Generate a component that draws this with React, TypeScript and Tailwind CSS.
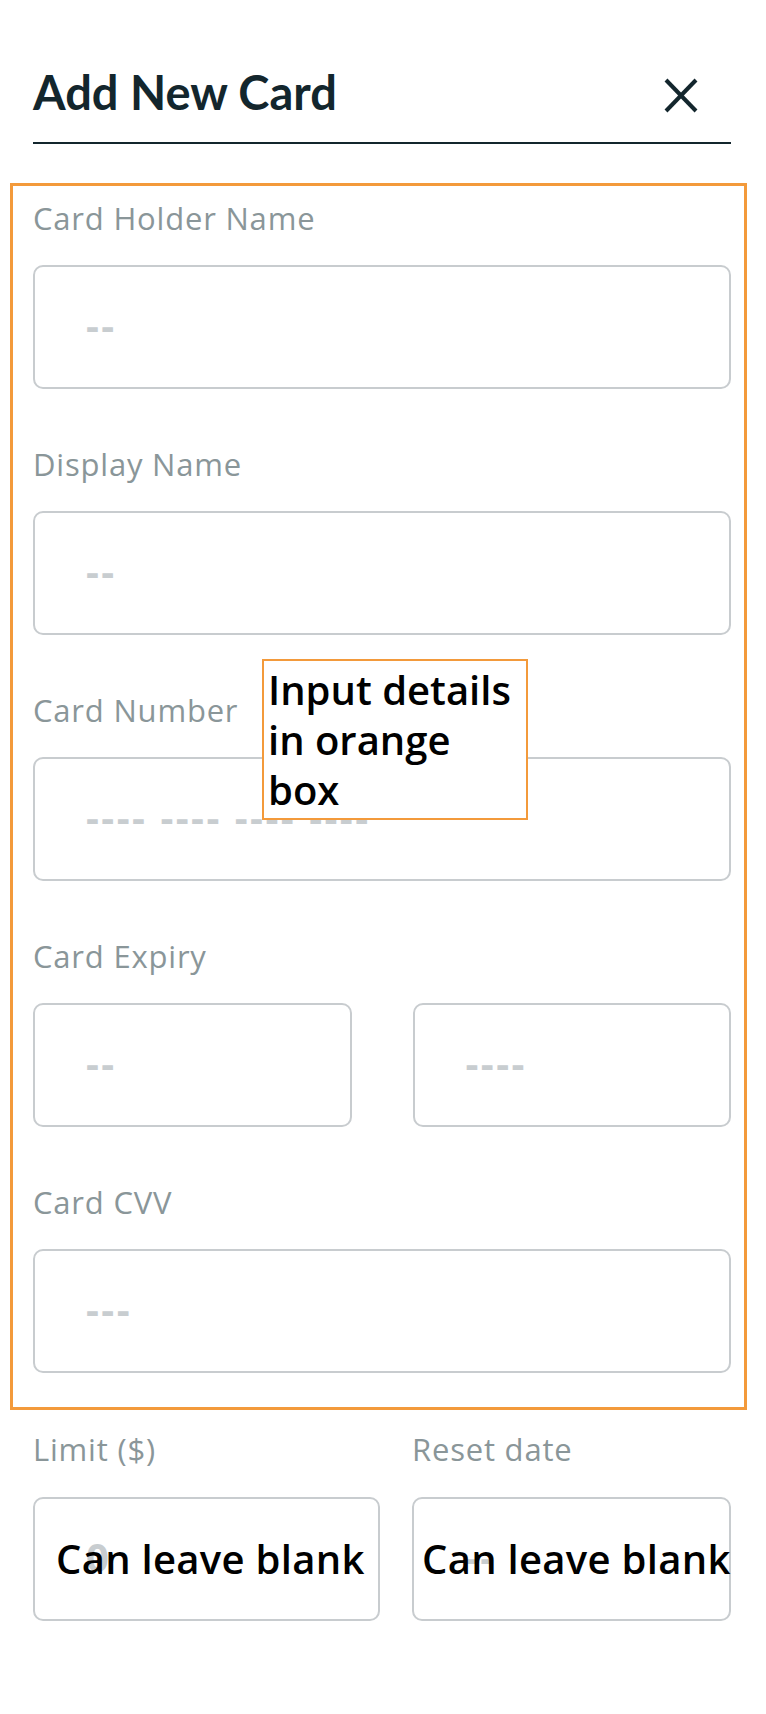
import React from "react";

const labelCls =
  "block text-[31px] leading-[40px] font-medium tracking-[0.8px] text-[#8a9699] font-['Open_Sans',sans-serif]";
const inputCls =
  "block w-full h-[124px] rounded-[10px] border-2 border-[#c8cccf] bg-white pl-[51px] pb-[6px] text-[40px] font-bold tracking-[2.5px] text-[#13262d] outline-none placeholder:text-[#c8cdd0] font-['Open_Sans',sans-serif]";

function Field({ label, placeholder }: { label: string; placeholder: string }) {
  return (
    <div>
      <label className={labelCls}>{label}</label>
      <input className={`${inputCls} mt-[27px]`} placeholder={placeholder} />
    </div>
  );
}

export default function App() {
  return (
    <div className="relative min-h-[1714px] bg-white font-['Open_Sans',sans-serif]">
      {/* Header */}
      <div className="ml-[33px] mr-[35px] pt-[64px] pb-[22px] border-b-2 border-[#13262d] flex items-start justify-between">
        <h1 className="text-[47px] leading-[56px] font-bold text-[#13262d] font-['Lato',sans-serif]">
          Add New Card
        </h1>
        <svg
          className="mt-[14px] mr-[33px]"
          width="34"
          height="35"
          viewBox="0 0 34 35"
          fill="none"
          stroke="#13262d"
          strokeWidth="4"
        >
          <line x1="2" y1="2" x2="32" y2="33" />
          <line x1="32" y1="2" x2="2" y2="33" />
        </svg>
      </div>

      {/* Required details */}
      <div className="mt-[39px] ml-[10px] mr-[19px] border-[3px] border-[#f39a3b] pl-[20px] pr-[13px] pt-[12px] pb-[34px] flex flex-col gap-[55px]">
        <Field label="Card Holder Name" placeholder="--" />
        <Field label="Display Name" placeholder="--" />
        <Field label="Card Number" placeholder="---- ---- ---- ----" />
        <div>
          <label className={labelCls}>Card Expiry</label>
          <div className="mt-[27px] grid grid-cols-2 gap-[61px]">
            <input className={inputCls} placeholder="--" />
            <input className={inputCls} placeholder="----" />
          </div>
        </div>
        <Field label="Card CVV" placeholder="---" />
      </div>

      {/* Optional details */}
      <div className="mt-[19px] ml-[33px] mr-[35px] grid grid-cols-[347px_1fr] gap-x-[32px]">
        <label className={labelCls}>Limit ($)</label>
        <label className={labelCls}>Reset date</label>
        <div className="relative mt-[28px]">
          <input className={`${inputCls} h-[123px]`} placeholder="0" />
          <span className="pointer-events-none absolute left-[23px] top-[37px] text-[40px] leading-[50px] font-semibold tracking-[0.3px] text-black whitespace-nowrap">
            Can leave blank
          </span>
        </div>
        <div className="relative mt-[28px]">
          <input className={`${inputCls} h-[123px]`} placeholder="--" />
          <span className="pointer-events-none absolute left-[10px] top-[37px] text-[40px] leading-[50px] font-semibold tracking-[0.3px] text-black whitespace-nowrap">
            Can leave blank
          </span>
        </div>
      </div>

      {/* Annotation note */}
      <div className="absolute left-[262px] top-[659px] w-[266px] h-[161px] border-2 border-[#f39a3b] bg-white pl-[4px] pt-[4px] text-[40px] leading-[50px] font-semibold text-black">
        Input details
        <br />
        in orange
        <br />
        box
      </div>
    </div>
  );
}
